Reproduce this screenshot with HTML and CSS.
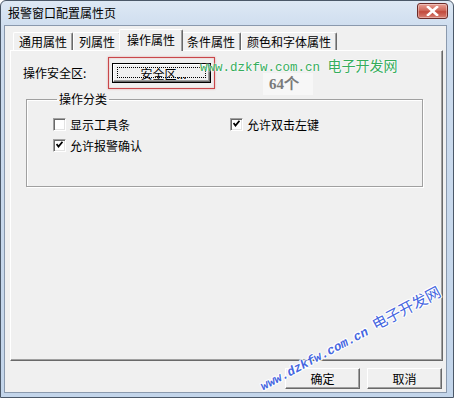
FILE: index.html
```html
<!DOCTYPE html>
<html lang="zh-CN">
<head>
    <meta charset="UTF-8">
    <title>报警窗口配置属性页</title>
    <link rel="stylesheet" href="styles.css">
</head>
<body>
    <div class="window">
        <div class="titlebar">
            <span class="title">报警窗口配置属性页</span>
            <span class="close">
                <svg width="13" height="10" viewBox="0 0 13 10">
                    <path d="M2 1 L11 9 M11 1 L2 9" stroke="#fff" stroke-width="2.6" stroke-linecap="square"/>
                </svg>
            </span>
        </div>

        <div class="client">
            <div class="tabs">
                <div class="tab">通用属性</div>
                <div class="tab">列属性</div>
                <div class="tab active">操作属性</div>
                <div class="tab">条件属性</div>
                <div class="tab">颜色和字体属性</div>
            </div>

            <div class="page">
                <div class="row">
                    <span class="label">操作安全区:</span>
                    <button class="btn default"><span class="focus">安全区...</span></button>
                </div>

                <fieldset class="group">
                    <legend>操作分类</legend>
                    <div class="checks">
                        <label class="check"><span class="box"></span>显示工具条</label>
                        <label class="check"><span class="box checked"></span>允许双击左键</label>
                        <label class="check"><span class="box checked"></span>允许报警确认</label>
                    </div>
                </fieldset>
            </div>

            <div class="footer">
                <button class="btn action">确定</button>
                <button class="btn action">取消</button>
            </div>
        </div>

        <!-- overlays from the screenshot source -->
        <div class="mark-red"></div>
        <div class="wm-green">www.dzkfw.com.cn <span class="cn">电子开发网</span></div>
        <div class="count">64个</div>
        <div class="wm-blue">www.dzkfw.com.cn <span class="cn">电子开发网</span></div>
    </div>
</body>
</html>
```

FILE: styles.css
```css
* {
    box-sizing: border-box;
}

body {
    margin: 0;
    width: 454px;
    height: 398px;
    overflow: hidden;
    font-family: "Noto Sans CJK SC", "Noto Sans", sans-serif;
    font-size: 12px;
    color: #000;
    background: #fff;
}

.window {
    position: relative;
    width: 454px;
    height: 398px;
    border: 1px solid #4b5868;
    border-radius: 6px 6px 0 0;
    background: linear-gradient(#dde8f4, #cddcee 30px, #c3d5ea);
    padding: 0 6px 4px 3px;
    display: flex;
    flex-direction: column;
}

.titlebar {
    height: 24px;
    display: flex;
    align-items: center;
    justify-content: space-between;
    padding-left: 4px;
}

.title {
    font-size: 12px;
    line-height: 1;
}

.close {
    width: 31px;
    height: 16px;
    margin-top: -4px;
    margin-right: -1px;
    border: 1px solid #6b2b28;
    border-radius: 3px;
    background: linear-gradient(#e8a095, #d06a5c 45%, #c24a3c 55%, #d88073);
    display: flex;
    align-items: center;
    justify-content: center;
    box-shadow: inset 0 0 0 1px rgba(255, 255, 255, 0.35);
}

.client {
    flex: 1;
    background: #f0f0f0;
    border: 1px solid #8a99ad;
    padding-top: 3px;
    display: flex;
    flex-direction: column;
}

/* tabs */
.tabs {
    display: flex;
    align-items: flex-end;
    padding-left: 8px;
    height: 21px;
    position: relative;
    z-index: 1;
}

.tab {
    height: 18px;
    padding: 0 5px;
    line-height: 17px;
    border-top: 1px solid #fff;
    border-left: 1px solid #fff;
    border-right: 1px solid #696969;
    box-shadow: inset -1px 0 #a0a0a0;
    border-radius: 2px 2px 0 0;
    white-space: nowrap;
}

.tab.active {
    height: 22px;
    margin: 0 -2px -1px;
    padding: 0 7px;
    line-height: 19px;
    background: #f0f0f0;
    position: relative;
}

/* page */
.page {
    height: 311px;
    margin: 0 3px 0 5px;
    border: 1px solid;
    border-color: #fff #696969 #696969 #fff;
    box-shadow: inset -1px -1px #a0a0a0;
    padding: 12px 19px 0 12px;
}

.row {
    display: flex;
    align-items: center;
    height: 19px;
}

.label {
    width: 90px;
}

.btn {
    font-family: inherit;
    font-size: 12px;
    color: #000;
    background: #f0f0f0;
    border: 1px solid;
    border-color: #fff #696969 #696969 #fff;
    box-shadow: inset -1px -1px #a0a0a0;
    padding: 0;
    margin: 0;
}

.btn.default {
    width: 97px;
    height: 18px;
    outline: 1px solid #000;
    padding: 2px 3px 3px 3px;
    display: flex;
}

.focus {
    flex: 1;
    border: 1px dotted #000;
    line-height: 11px;
    text-align: center;
    padding-left: 4px;
}

.group {
    margin: 10px 0 0 3px;
    height: 95px;
    border: 1px solid #a0a0a0;
    box-shadow: inset 1px 1px #fff, 1px 1px #fff;
    padding: 11px 0 0 26px;
    min-width: 0;
}

.group legend {
    padding: 0 2px;
    margin-left: 4px;
    line-height: 14px;
}

.checks {
    display: grid;
    grid-template-columns: 177px auto;
    row-gap: 6px;
}

.check {
    display: flex;
    align-items: center;
    gap: 4px;
    height: 15px;
}

.box {
    width: 13px;
    height: 13px;
    background: #fff;
    border: 1px solid;
    border-color: #a0a0a0 #fff #fff #a0a0a0;
    box-shadow: inset 1px 1px #696969, inset -1px -1px #e3e3e3;
    position: relative;
}

.box.checked::after {
    content: "";
    position: absolute;
    left: 2px;
    top: 1px;
    width: 7px;
    height: 7px;
    background: url("data:image/svg+xml,%3Csvg xmlns='http://www.w3.org/2000/svg' width='7' height='7'%3E%3Cpath d='M0.5 3 L2.5 5.5 L6.5 0.8' fill='none' stroke='%23000' stroke-width='1.8'/%3E%3C/svg%3E") no-repeat;
}

.footer {
    display: flex;
    justify-content: flex-end;
    gap: 7px;
    margin: 7px 4px 0 0;
}

.btn.action {
    width: 75px;
    height: 21px;
}

/* overlays */
.mark-red {
    position: absolute;
    left: 107px;
    top: 56px;
    width: 107px;
    height: 32px;
    border: 1px solid #c9474a;
    box-shadow: 0 0 2px rgba(210, 70, 70, 0.45), inset 0 0 2px rgba(210, 70, 70, 0.35);
}

.wm-green {
    position: absolute;
    left: 199px;
    top: 54px;
    color: #35ad5c;
    font-family: "Liberation Mono", monospace;
    font-size: 12.5px;
    white-space: nowrap;
    text-shadow: 0 0 2px #fff, 0 0 2px #fff;
}

.wm-green .cn {
    font-family: "Noto Sans CJK SC", sans-serif;
    font-size: 14px;
}

.count {
    position: absolute;
    left: 262px;
    top: 72px;
    width: 50px;
    height: 22px;
    background: rgba(255, 255, 255, 0.45);
    color: #7a7a7a;
    font-family: "Liberation Serif", serif;
    font-weight: bold;
    font-size: 15px;
    line-height: 22px;
    padding-left: 6px;
}

.wm-blue {
    position: absolute;
    left: 264px;
    top: 372px;
    transform: rotate(-28deg);
    transform-origin: left bottom;
    color: #4566e0;
    font-family: "Liberation Mono", monospace;
    font-style: italic;
    font-weight: bold;
    font-size: 12.5px;
    white-space: nowrap;
    text-shadow: 1px 1px 0 #fff, -1px -1px 0 #fff, 1px -1px 0 #fff, -1px 1px 0 #fff;
}

.wm-blue .cn {
    font-family: "Noto Sans CJK SC", sans-serif;
    font-style: normal;
    font-weight: normal;
    font-size: 15px;
}
```
